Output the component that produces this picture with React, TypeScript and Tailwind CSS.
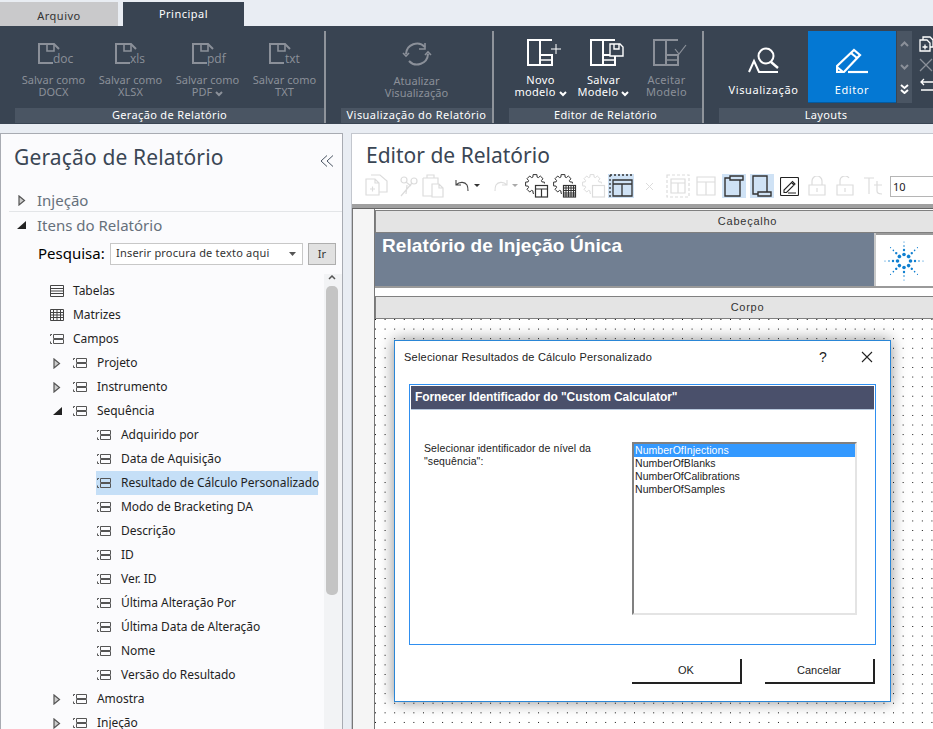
import React from 'react';

const ribbonFont = "font-['Open_Sans',sans-serif]";

function SaveIcon({ ext }: { ext: string }) {
  return (
    <svg width="38" height="24" viewBox="0 0 38 24" fill="none" stroke="#8b9099" strokeWidth="2">
      <path d="M1 22V2h15l5 5" />
      <path d="M1 21h14" />
      <path d="M9 2v7h7V2" strokeWidth="1.6" />
      <text x={ext === 'txt' ? 16 : 15} y="21" fontSize="12" fill="#8b9099" stroke="none" fontFamily="Open Sans, sans-serif">{ext}</text>
    </svg>
  );
}

function Caret() {
  return (
    <svg className="inline-block ml-[3px] align-[-1px]" width="8" height="6" viewBox="0 0 8 6" fill="none" stroke="currentColor" strokeWidth="2">
      <path d="M1 1l3 3 3-3" />
    </svg>
  );
}

function SaveButton({ ext, line2, caret }: { ext: string; line2: string; caret?: boolean }) {
  return (
    <div className="w-[77px] flex flex-col items-center text-[#8b9099]">
      <div className="h-[24px] mt-[16px] pl-[6px]"><SaveIcon ext={ext} /></div>
      <div className="mt-[8px] text-[11px] leading-[12px] tracking-[0.05px] text-center">Salvar como<br />{line2}{caret && <Caret />}</div>
    </div>
  );
}

function TemplateIcon({ color, children }: { color: string; children?: React.ReactNode }) {
  return (
    <svg width="34" height="27" viewBox="0 0 34 27" fill="none" stroke={color} strokeWidth="2">
      <path d="M1 1h12v25H1z" />
      <path d="M13 1h12M13 26h12V16H13" />
      <path d="M13 21h12" strokeWidth="1.5" />
      {children}
    </svg>
  );
}

function TemplateButton({ line1, line2, color, caret, children }: { line1: string; line2: string; color: string; caret?: boolean; children?: React.ReactNode }) {
  return (
    <div className="w-[63px] flex flex-col items-center" style={{ color }}>
      <div className="mt-[13px] pl-[6px] h-[27px]"><TemplateIcon color={color}>{children}</TemplateIcon></div>
      <div className="mt-[8px] text-[11px] leading-[12px] tracking-[0.3px] text-center">{line1}<br />{line2}{caret && <Caret />}</div>
    </div>
  );
}

function Separator() {
  return <div className="w-[2px] h-[92px] mt-[5px] bg-[#8f949b]" />;
}

function GroupLabel({ children }: { children: React.ReactNode }) {
  return <div className="h-[15px] mt-auto bg-[#4a5563] text-white text-[11px] leading-[14px] tracking-[0.35px] text-center">{children}</div>;
}

function Ribbon() {
  return (
    <div className={`${ribbonFont} h-[98px] bg-[#394452] flex overflow-hidden shrink-0`}>
      <div className="w-[324px] pl-[15px] flex flex-col h-[97px]">
        <div className="flex">
          <SaveButton ext="doc" line2="DOCX" />
          <SaveButton ext="xls" line2="XLSX" />
          <SaveButton ext="pdf" line2="PDF" caret />
          <SaveButton ext="txt" line2="TXT" />
        </div>
        <GroupLabel>Geração de Relatório</GroupLabel>
      </div>
      <Separator />
      <div className="w-[166px] pl-[15px] flex flex-col h-[97px]">
        <div className="flex flex-col items-center text-[#8b9099]">
          <svg className="mt-[15px]" width="30" height="26" viewBox="0 0 30 26" fill="none" stroke="#8b9099" strokeWidth="2">
            <path d="M4 13a11 11 0 0 1 19-7" />
            <path d="M26 13a11 11 0 0 1-19 7" />
            <path d="M23 2v6h-6M1 12l3 3 3-3M23 14l3-3 3 3" strokeWidth="1.6" />
          </svg>
          <div className="mt-[8px] text-[11px] leading-[12px] tracking-[0.05px] text-center">Atualizar<br />Visualização</div>
        </div>
        <GroupLabel><span className="tracking-[0.45px]">Visualização do Relatório</span></GroupLabel>
      </div>
      <Separator />
      <div className="w-[208px] pl-[15px] flex flex-col h-[97px]">
        <div className="flex">
          <TemplateButton line1="Novo" line2="modelo" color="#ffffff" caret>
            <path d="M29 5v10M24 10h10" strokeWidth="1" />
          </TemplateButton>
          <TemplateButton line1="Salvar" line2="Modelo" color="#ffffff" caret>
            <path d="M20 5h10l3 3v9H20zM24 5v5h5V5" strokeWidth="1.4" fill="#394452" />
          </TemplateButton>
          <TemplateButton line1="Aceitar" line2="Modelo" color="#8b9099">
            <path d="M22 10l4 5 7-9" strokeWidth="1.2" />
          </TemplateButton>
        </div>
        <GroupLabel>Editor de Relatório</GroupLabel>
      </div>
      <Separator />
      <div className="flex-1 pl-[15px] flex flex-col h-[97px]">
        <div className="flex h-[72px] mt-[5px]">
          <div className="w-[89px] flex flex-col items-center text-white">
            <svg className="mt-[16px]" width="32" height="27" viewBox="0 0 32 27" fill="none" stroke="#fff" strokeWidth="2">
              <circle cx="18" cy="9" r="7.5" />
              <path d="M23 15l7 6" strokeWidth="2.4" />
              <path d="M1 25l5-11 5 11h19" />
            </svg>
            <div className="mt-[10px] text-[11px] leading-[12px] tracking-[0.6px]">Visualização</div>
          </div>
          <div className="w-[88px] bg-[#0478d3] border-b border-[#055a9e] flex flex-col items-center text-white">
            <svg className="mt-[17px]" width="32" height="26" viewBox="0 0 32 26" fill="none" stroke="#fff" strokeWidth="2.2">
              <path d="M1 24v-6L18 2l6 5L8 24z" />
              <path d="M15 5l6 5M1 19l6 5" />
              <path d="M12 24h20" />
            </svg>
            <div className="mt-[10px] text-[11px] leading-[12px] tracking-[0.6px]">Editor</div>
          </div>
          <div className="w-[15px] ml-[1px] bg-[#4a5563] flex flex-col items-center">
            <svg className="mt-[10px]" width="9" height="6" viewBox="0 0 9 6" fill="none" stroke="#8b9099" strokeWidth="2"><path d="M1 5l3.5-3.5L8 5" /></svg>
            <svg className="mt-[17px]" width="9" height="6" viewBox="0 0 9 6" fill="none" stroke="#8b9099" strokeWidth="2"><path d="M1 1l3.5 3.5L8 1" /></svg>
            <svg className="mt-[14px]" width="9" height="10" viewBox="0 0 9 10" fill="none" stroke="#fff" strokeWidth="2"><path d="M1 1l3.5 3L8 1M1 6l3.5 3L8 6" /></svg>
          </div>
          <div className="w-[21px] pl-[7px] flex flex-col shrink-0">
            <svg className="mt-[5px]" width="16" height="16" viewBox="0 0 16 16" fill="none" stroke="#fff" strokeWidth="1.3"><path d="M1 4h7l3 3v8H1zM4 4V1h7l3 3v7h-3M3.5 11h5M6 8.5v5" /></svg>
            <svg className="mt-[6px]" width="14" height="14" viewBox="0 0 14 14" fill="none" stroke="#8b9099" strokeWidth="1.3"><path d="M1 1l12 12M13 1L1 13" /></svg>
            <svg className="mt-[6px]" width="16" height="14" viewBox="0 0 16 14" fill="none" stroke="#fff" strokeWidth="1.3"><path d="M16 4H2M5 1L2 4l3 3M2 12h14" /></svg>
          </div>
        </div>
        <GroupLabel>Layouts</GroupLabel>
      </div>
    </div>
  );
}

function FieldIcon() {
  return (
    <svg className="shrink-0" width="14" height="12" viewBox="0 0 14 12" fill="none" stroke="#555" strokeWidth="1">
      <path d="M0.5 3V1.500H2M0.5 8.500V10.500H2" />
      <path d="M3.5 1.500h10v4h-10zM3.500 6.500h10v4h-10z" />
    </svg>
  );
}

function ArrowOpen({ className }: { className?: string }) {
  return (
    <svg className={className} width="8" height="11" viewBox="0 0 8 11" fill="none" stroke="#555" strokeWidth="1.2">
      <path d="M1 1l5.500 4.500L1 10z" fill="#ccc" />
    </svg>
  );
}

function ArrowDown({ className }: { className?: string }) {
  return (
    <svg className={className} width="9" height="9" viewBox="0 0 9 9">
      <path d="M9 0v8H0z" fill="#222" />
    </svg>
  );
}

function TreeRow({ label, level, arrow, icon, selected }: { label: string; level: number; arrow?: 'open' | 'down'; icon?: React.ReactNode; selected?: boolean }) {
  const pad = level === 0 ? 'pl-[48px]' : level === 1 ? 'pl-[52px]' : 'pl-[95px]';
  return (
    <div className={`h-[24px] flex items-center ${pad} text-[12px] tracking-[-0.05px] text-[#1f1f1f] whitespace-nowrap`}>
      {level === 1 && (
        <div className="w-[19px] flex items-center">
          {arrow === 'open' ? <ArrowOpen /> : <ArrowDown />}
        </div>
      )}
      <div className={`flex items-center h-[24px] pl-[1px] ${selected ? 'bg-[#c5dff7] w-[222px]' : ''}`}>
        {icon || <FieldIcon />}
        <span className={level === 0 ? 'ml-[9px]' : 'ml-[10px]'}>{label}</span>
      </div>
    </div>
  );
}

const seqFields = [
  'Adquirido por',
  'Data de Aquisição',
  'Resultado de Cálculo Personalizado',
  'Modo de Bracketing DA',
  'Descrição',
  'ID',
  'Ver. ID',
  'Última Alteração Por',
  'Última Data de Alteração',
  'Nome',
  'Versão do Resultado',
];

function LeftPanel() {
  return (
    <div className="w-[343px] shrink-0 bg-[#fbfbfd] border-l border-r border-t border-[#a8abb2] flex flex-col overflow-hidden font-['Open_Sans',sans-serif]">
      <div className="flex items-center justify-between h-[45px] pl-[13px] pr-[8px] pt-[3px]">
        <span className="text-[21px] text-[#3a4654] tracking-[0.15px]">Geração de Relatório</span>
        <svg className="mt-[6px]" width="14" height="12" viewBox="0 0 14 12" fill="none" stroke="#4a5563" strokeWidth="1"><path d="M7 0.5L1 6l6 5.500M13 0.5L7 6l6 5.500" /></svg>
      </div>
      <div className="ml-[8px] h-[33px] flex items-center pl-[9px] border-b border-[#e3e5e8] pt-[10px] text-[15px] text-[#66707b]">
        <ArrowOpen />
        <span className="ml-[11px]">Injeção</span>
      </div>
      <div className="h-[26px] flex items-center pl-[16px] text-[15px] text-[#66707b]">
        <ArrowDown />
        <span className="ml-[11px]">Itens do Relatório</span>
      </div>
      <div className="flex items-center h-[31px] pl-[37px]">
        <span className="text-[15px] text-black w-[72px]">Pesquisa:</span>
        <div className="w-[193px] h-[22px] border border-[#c8c8c8] bg-white flex items-center justify-between pl-[5px] pr-[6px] text-[11px] tracking-[0.2px] text-[#333]">
          <span>Inserir procura de texto aqui</span>
          <svg width="7" height="4" viewBox="0 0 7 4"><path d="M0 0h7L3.500 4z" fill="#555" /></svg>
        </div>
        <div className="ml-[5px] w-[28px] h-[22px] border border-[#aeaeae] bg-[#e1e1e1] text-[11px] text-center leading-[20px] text-[#333]">Ir</div>
      </div>
      <div className="flex flex-1 mt-[5px] overflow-hidden">
        <div className="flex-1 min-w-0">
          <div className="h-[5px]" />
          <TreeRow level={0} label="Tabelas" icon={
            <svg width="14" height="12" viewBox="0 0 14 12" fill="none" stroke="#444"><path d="M0.500 0.500h13v11h-13zM0.500 3.500h13M0.500 6h13M0.500 8.500h13" /></svg>
          } />
          <TreeRow level={0} label="Matrizes" icon={
            <svg width="14" height="12" viewBox="0 0 14 12" fill="none" stroke="#444"><path d="M0.500 0.500h13v11h-13zM0.500 3.500h13M0.500 6h13M0.500 8.500h13M3.500 0.500v11M7 0.500v11M10.500 0.500v11" /></svg>
          } />
          <TreeRow level={0} label="Campos" />
          <TreeRow level={1} arrow="open" label="Projeto" />
          <TreeRow level={1} arrow="open" label="Instrumento" />
          <TreeRow level={1} arrow="down" label="Sequência" />
          {seqFields.map((f) => (
            <TreeRow key={f} level={2} label={f} selected={f.startsWith('Resultado')} />
          ))}
          <TreeRow level={1} arrow="open" label="Amostra" />
          <TreeRow level={1} arrow="open" label="Injeção" />
        </div>
        <div className="w-[18px] shrink-0 bg-[#f2f3f5] pl-[2px] flex flex-col">
          <svg className="mt-[1px] ml-[2px]" width="8" height="5" viewBox="0 0 8 5" fill="none" stroke="#555" strokeWidth="1.5"><path d="M1 4l3-3 3 3" /></svg>
          <div className="w-[12px] h-[309px] mt-[6px] rounded-[5px] bg-[#c4c4c4]" />
        </div>
      </div>
    </div>
  );
}

const ghost = '#dcdcdc';
const ink = '#333';

function Tool({ children, active, w }: { children: React.ReactNode; active?: boolean; w: string }) {
  return <div className={`${w} h-[24px] shrink-0 flex items-center justify-center ${active ? 'bg-[#cfe2f5]' : ''}`}>{children}</div>;
}

// eight toothed outline around (10,10), the table badge covers its lower right
const gearPath = (() => {
  const pts: string[] = [];
  for (let i = 0; i < 8; i++) {
    const a = (i * Math.PI) / 4;
    [[-0.3, 7.2], [-0.2, 9.6], [0.2, 9.6], [0.3, 7.2]].forEach(([da, r]) => {
      pts.push(`${(10 + r * Math.cos(a + da)).toFixed(1)} ${(10 + r * Math.sin(a + da)).toFixed(1)}`);
    });
  }
  return `M${pts.join('L')}z`;
})();

function GearBadge({ color, grid, plain }: { color: string; grid?: boolean; plain?: boolean }) {
  return (
    <svg width="24" height="24" viewBox="0 0 24 24" fill="none" stroke={color} strokeWidth="1">
      <path d={gearPath} />
      <rect x="9" y="9.500" width="15" height="14.500" fill="#fff" stroke="none" />
      <rect x="10.500" y="11.500" width="12" height="11.500" strokeWidth="1.200" />
      {!plain && !grid && <path d="M10.500 15h12M16.500 15v8" strokeWidth="1.200" />}
      {grid && <path d="M10.500 14h12M10.500 16.500h12M10.500 19h12M10.500 21h12M13 11.500V23M15.500 11.500V23M18 11.500V23M20.500 11.500V23" strokeWidth="1" />}
    </svg>
  );
}

function Toolbar() {
  return (
    <div className="flex items-center h-[24px] mt-[3px] pl-[13px]">
      <Tool w="w-[24px]">
        <svg width="24" height="24" viewBox="0 0 24 24" fill="none" stroke={ghost} strokeWidth="1.2"><path d="M1 5h9l4 4v12H1zM10 5v4h4M6 1h9l7 6v11h-8" /><path d="M5 15h5M7.500 12.500v5" /></svg>
      </Tool>
      <Tool w="w-[24px] ml-[8px]">
        <svg width="22" height="22" viewBox="0 0 22 22" fill="none" stroke={ghost} strokeWidth="1.2"><circle cx="16" cy="6" r="3" /><circle cx="6" cy="5" r="3" /><path d="M8 7l5 4M14 8L3 21M9 10l-1 9" /></svg>
      </Tool>
      <Tool w="w-[22px] ml-[1px]">
        <svg width="22" height="24" viewBox="0 0 22 24" fill="none" stroke={ghost} strokeWidth="1.2"><path d="M5 4V1h7v3M1 4h15v6M1 4v18h9M10 10h7l4 4v9H10zM17 10v4h4" /></svg>
      </Tool>
      <Tool w="w-[26px] ml-[11px]">
        <svg width="26" height="14" viewBox="0 0 26 14" fill="none" stroke="#444" strokeWidth="1.1"><path d="M1 1v5h5M1 6c4-4 9-3 11 0 1 2 1 4 1 6" /><path d="M19 5h6l-3 3z" fill="#333" stroke="none" /></svg>
      </Tool>
      <Tool w="w-[26px] ml-[11px]">
        <svg width="26" height="14" viewBox="0 0 26 14" fill="none" stroke={ghost} strokeWidth="1.1"><path d="M15 1v5h-5M15 6c-4-4-9-3-11 0-1 2-1 4-1 6" /><path d="M20 5h6l-3 3z" fill="#aaa" stroke="none" /></svg>
      </Tool>
      <Tool w="w-[24px] ml-[7px]"><GearBadge color={ink} /></Tool>
      <Tool w="w-[24px] ml-[4px]"><GearBadge color={ink} grid /></Tool>
      <Tool w="w-[24px] ml-[5px]"><GearBadge color={ghost} plain /></Tool>
      <Tool w="w-[26px] ml-[2px]" active>
        <svg width="24" height="24" viewBox="0 0 24 24" fill="none" stroke={ink} strokeWidth="1.3"><path d="M1 1h22" strokeDasharray="2 2" /><path d="M1 1v22" strokeDasharray="2 2" /><path d="M4 6h19v16H4zM4 10h19M13 10v12" /></svg>
      </Tool>
      <Tool w="w-[14px] ml-[8px]">
        <svg width="9" height="9" viewBox="0 0 9 9" stroke={ghost}><path d="M1 1l7 7M8 1L1 8" /></svg>
      </Tool>
      <Tool w="w-[24px] ml-[10px]">
        <svg width="24" height="24" viewBox="0 0 24 24" fill="none" stroke={ghost} strokeWidth="1.2"><path d="M1 1h22v22H1z" strokeDasharray="3 2" /><path d="M5 5h14v14H5zM5 9h14M12 9v10" /></svg>
      </Tool>
      <Tool w="w-[20px] ml-[6px]">
        <svg width="20" height="20" viewBox="0 0 20 20" fill="none" stroke={ghost} strokeWidth="1.2"><path d="M1 1h18v18H1zM1 6h18M10 6v13" /></svg>
      </Tool>
      <Tool w="w-[24px] ml-[6px]" active>
        <svg width="20" height="22" viewBox="0 0 20 22" fill="none" stroke={ink} strokeWidth="1.4"><path d="M6 3H1v18h15V5" /><path d="M6 1h13v4H6z" /></svg>
      </Tool>
      <Tool w="w-[24px] ml-[4px]" active>
        <svg width="20" height="22" viewBox="0 0 20 22" fill="none" stroke={ink} strokeWidth="1.4"><path d="M6 19H1V1h14v16" /><path d="M6 17h13v4H6z" /></svg>
      </Tool>
      <Tool w="w-[19px] ml-[6px]">
        <svg width="19" height="19" viewBox="0 0 19 19" fill="none" stroke="#222" strokeWidth="1.1"><rect x="0.500" y="0.500" width="18" height="18" rx="1" /><path d="M4 13v2.500h2.500L15 7l-2.500-2.500zM11.500 5.500L14 8M8 16h8" /></svg>
      </Tool>
      <Tool w="w-[18px] ml-[9px]">
        <svg width="18" height="20" viewBox="0 0 18 20" fill="none" stroke={ghost} strokeWidth="1.2"><path d="M1 9h16v10H1zM4 9V5a5 5 0 0 1 10 0v4M9 12v4" /></svg>
      </Tool>
      <Tool w="w-[18px] ml-[10px]">
        <svg width="18" height="20" viewBox="0 0 18 20" fill="none" stroke={ghost} strokeWidth="1.2"><path d="M1 9h16v10H1zM4 9V5a5 5 0 0 1 9-3M9 12v4" /></svg>
      </Tool>
      <Tool w="w-[20px] ml-[9px]">
        <svg width="20" height="18" viewBox="0 0 20 18" fill="none" stroke={ghost} strokeWidth="1.2"><path d="M1 1h10M6 1v16M11 8h8M14 4v10c0 2 2 3 5 3" /></svg>
      </Tool>
      <div className="ml-[7px] w-[60px] h-[21px] shrink-0 border border-[#b5b5b5] bg-white text-[11px] leading-[19px] pl-[2px] text-[#222]">10</div>
    </div>
  );
}

function BandBar({ label }: { label: string }) {
  return (
    <div className="h-[23px] bg-[#e4e4e4] border border-[#808080] border-r-0 text-[11px] leading-[21px] text-center text-[#333] font-[family-name:Liberation_Sans,sans-serif] tracking-[0.75px]">{label}</div>
  );
}

function AgilentSpark() {
  const rays = [0, 45, 90, 135, 180, 225, 270, 315];
  return (
    <svg width="42" height="42" viewBox="-21 -21 42 42" fill="#0f7fd0">
      {rays.map((a) => (
        <g key={a} transform={`rotate(${a})`}>
          <circle cx="0" cy="-6.500" r="1.800" />
          <circle cx="0" cy="-11" r="1.200" />
          <circle cx="0" cy="-15" r="0.800" />
          <circle cx="0" cy="-19" r="0.600" />
        </g>
      ))}
    </svg>
  );
}

function RightPanel() {
  return (
    <div className="w-[582px] ml-[8px] shrink-0 bg-white border-l border-t border-[#c3c7ce] flex flex-col overflow-hidden">
      <div className="h-[74px] shrink-0 border-b-4 border-[#a0a0a0] font-['Open_Sans',sans-serif]">
        <div className="pl-[14px] pt-[7px] h-[37px] text-[21px] leading-[28px] text-[#3a4654]">Editor de Relatório</div>
        <Toolbar />
      </div>
      <div className="flex flex-1 min-h-0 border-t border-[#666]">
        <div className="w-[23px] shrink-0 bg-[#f5f5f5] border-l border-r border-[#777]" />
        <div className="w-[744px] shrink-0 flex flex-col">
          <div className="h-[1px]" />
          <BandBar label="Cabeçalho" />
          <div className="flex h-[55px] border-b-2 border-[#9a9a9a] bg-[#c8c8c8]">
            <div className="w-[499px] shrink-0 bg-[#717f92] pl-[7px] pt-[1px] text-[19px] tracking-[0.1px] leading-[24px] font-bold text-white font-[family-name:Liberation_Sans,sans-serif]">Relatório de Injeção Única</div>
            <div className="ml-[2px] flex-1 bg-white flex items-center pl-[7px] border-t-2 border-[#9a9a9a]"><AgilentSpark /></div>
          </div>
          <div className="h-[8px]" />
          <BandBar label="Corpo" />
          <div className="flex-1 bg-[radial-gradient(circle_at_0.5px_0.5px,#000_0.7px,transparent_0.8px)] bg-[length:9.6px_9.6px]" />
        </div>
      </div>
    </div>
  );
}

function SelectDialog() {
  return (
    <div className="absolute left-[394px] top-[340px] w-[497px] h-[362px] bg-white border border-[#2a86d6] shadow-[0_0_14px_rgba(0,0,0,0.45)] font-[family-name:Liberation_Sans,sans-serif] text-[11px] text-[#222]">
      <div className="flex items-center h-[30px] pl-[9px] pr-[17px] mt-[1px] tracking-[0.22px]">
        <span>Selecionar Resultados de Cálculo Personalizado</span>
        <span className="ml-auto text-[14px] text-[#222]">?</span>
        <svg className="ml-[34px]" width="12" height="12" viewBox="0 0 12 12" stroke="#222" strokeWidth="1.1"><path d="M1 1l10 10M11 1L1 11" /></svg>
      </div>
      <div className="mx-[14px] mt-[12px] h-[261px] border border-[#2f8ff0]">
        <div className="mx-[1px] mt-[1px] h-[24px] bg-[#4a506b] border-b border-[#b8c8dc] text-white font-bold text-[12px] tracking-[-0.08px] leading-[23px] pl-[4px]">Fornecer Identificador do "Custom Calculator"</div>
        <div className="flex pt-[32px] pl-[14px] text-[10.5px] leading-[13px]">
          <div className="w-[208px] tracking-[0.1px]">Selecionar identificador de nível da<br />"sequência":</div>
          <div className="w-[225px] h-[173px] border-2 border-[#808080] border-r-[#e4e4e4] border-b-[#e4e4e4] tracking-[0.05px]">
            <div className="bg-[#3399ff] text-white pl-[1px]">NumberOfInjections</div>
            <div className="pl-[1px]">NumberOfBlanks</div>
            <div className="pl-[1px]">NumberOfCalibrations</div>
            <div className="pl-[1px]">NumberOfSamples</div>
          </div>
        </div>
      </div>
      <div className="flex justify-end gap-[23px] mr-[15px] mt-[14px]">
        <div className="w-[110px] h-[25px] border-r-2 border-b-2 border-[#222] text-center leading-[23px]">OK</div>
        <div className="w-[110px] h-[25px] border-r-2 border-b-2 border-[#222] text-center leading-[23px]">Cancelar</div>
      </div>
    </div>
  );
}

export default function App() {
  return (
    <div className="relative w-[933px] h-[729px] overflow-hidden bg-[#e9edf3] flex flex-col">
      <div className={`${ribbonFont} h-[26px] shrink-0 pt-[2px] flex items-stretch text-[11px] tracking-[0.5px]`}>
        <div className="w-[118px] bg-[#c9c9cb] text-[#333] text-center leading-[27px]">Arquivo</div>
        <div className="w-[121px] ml-[5px] bg-[#394452] text-white text-center leading-[24px]">Principal</div>
      </div>
      <Ribbon />
      <div className="flex flex-1 min-h-0 mt-[9px]">
        <LeftPanel />
        <RightPanel />
      </div>
      <SelectDialog />
    </div>
  );
}
